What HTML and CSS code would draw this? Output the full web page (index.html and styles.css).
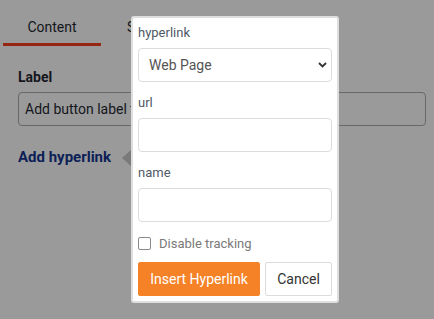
FILE: index.html
```html
<!DOCTYPE html>
<html lang="en">
<head>
    <meta charset="UTF-8">
    <title>Button settings</title>
    <link rel="stylesheet" href="styles.css">
</head>
<body>
    <div class="tabs">
        <div class="tab active">Content</div>
        <div class="tab second">Style</div>
    </div>

    <div class="panel">
        <div class="field-title">Label</div>
        <input class="label-input" type="text" value="Add button label text">
        <div class="link-title">Add hyperlink</div>
    </div>

    <!-- popover over the panel -->
    <div class="arrow"></div>
    <div class="popover">
        <label class="pop-label">hyperlink</label>
        <div class="select-wrap">
            <select class="pop-select">
                <option>Web Page</option>
                <option>Email</option>
            </select>
            <svg class="chevron" width="9" height="6" viewBox="0 0 9 6"><path d="M1 1 L4.5 4.5 L8 1" fill="none" stroke="#333" stroke-width="1.8"/></svg>
        </div>

        <label class="pop-label gap">url</label>
        <input class="pop-input" type="text">

        <label class="pop-label gap">name</label>
        <input class="pop-input" type="text">

        <label class="check-row">
            <span class="check-box"></span>
            <span>Disable tracking</span>
        </label>

        <div class="actions">
            <button class="btn-insert">Insert Hyperlink</button>
            <button class="btn-cancel">Cancel</button>
        </div>
    </div>
</body>
</html>
```

FILE: styles.css
```css
/* colours (page is seen through a grey overlay) */
:root {
    --overlay: #9a9a9a;
    --tab-line: #962611;
    --ink: #14161c;
    --navy: #0c1f57;
    --orange: #f58226;
    --soft-border: #dcdcdc;
    --label-color: #4f5965;
}

body {
    margin: 0;
    height: 319px;
    overflow: hidden;
    position: relative;
    background-color: var(--overlay);
    font-family: Roboto, "Noto Sans", sans-serif;
    color: var(--ink);
}

/* tabs */
.tabs {
    display: flex;
    padding-left: 3px;
}

.tab {
    width: 98px;
    height: 46px;
    box-sizing: border-box;
    padding-top: 18px;
    line-height: 18px;
    font-size: 14px;
    text-align: center;
}

.tab.active {
    border-bottom: 3px solid var(--tab-line);
}

.tab.second {
    text-align: left;
    padding-left: 26px;
}

/* panel under the popover */
.panel {
    padding: 22px 8px 0 18px;
}

.field-title {
    font-size: 14px;
    font-weight: bold;
    line-height: 18px;
}

.label-input {
    display: block;
    width: 100%;
    height: 34px;
    box-sizing: border-box;
    margin-top: 6px;
    padding: 0 6px;
    border: 1px solid #686868;
    border-radius: 4px;
    background: transparent;
    font-family: inherit;
    font-size: 14px;
    color: var(--ink);
}

.link-title {
    margin-top: 21px;
    line-height: 20px;
    font-size: 15px;
    font-weight: bold;
    color: var(--navy);
}

/* popover */
.arrow {
    position: absolute;
    left: 122px;
    top: 150px;
    width: 0;
    height: 0;
    border-top: 8px solid transparent;
    border-bottom: 8px solid transparent;
    border-right: 9px solid #7a7a7a;
}

.popover {
    position: absolute;
    left: 131px;
    top: 16px;
    width: 208px;
    box-sizing: border-box;
    padding: 6px 5px 5px 5px;
    background: #fff;
    border: 2px solid #dedede;
    border-radius: 3px;
    display: flex;
    flex-direction: column;
}

.pop-label {
    line-height: 18px;
    font-size: 13px;
    color: var(--label-color);
}

.pop-label.gap {
    margin-top: 12px;
}

.select-wrap {
    position: relative;
    margin-top: 6px;
}

.pop-select {
    display: block;
    width: 100%;
    height: 34px;
    padding: 0 10px;
    appearance: none;
    -webkit-appearance: none;
    border: 1px solid var(--soft-border);
    border-radius: 4px;
    background: #fff;
    font-family: inherit;
    font-size: 14px;
    color: #555;
}

.chevron {
    position: absolute;
    right: 5px;
    top: 14px;
}

.pop-input {
    display: block;
    width: 100%;
    height: 34px;
    box-sizing: border-box;
    margin-top: 6px;
    border: 1px solid var(--soft-border);
    border-radius: 4px;
    background: #fff;
}

.check-row {
    display: flex;
    align-items: center;
    gap: 8px;
    margin-top: 12px;
    height: 18px;
    font-size: 13px;
    color: #7a7a7a;
}

.check-box {
    width: 11px;
    height: 11px;
    border: 1px solid #8a8a8a;
    border-radius: 2px;
    background: #fff;
}

.actions {
    display: flex;
    gap: 5px;
    margin-top: 10px;
}

.btn-insert,
.btn-cancel {
    height: 34px;
    border-radius: 2px;
    font-family: inherit;
    font-size: 14px;
    cursor: pointer;
}

.btn-insert {
    width: 122px;
    border: 1px solid var(--orange);
    background-color: var(--orange);
    color: #fff;
}

.btn-cancel {
    flex: 1;
    border: 1px solid var(--soft-border);
    background-color: #fff;
    color: #333;
}
```
